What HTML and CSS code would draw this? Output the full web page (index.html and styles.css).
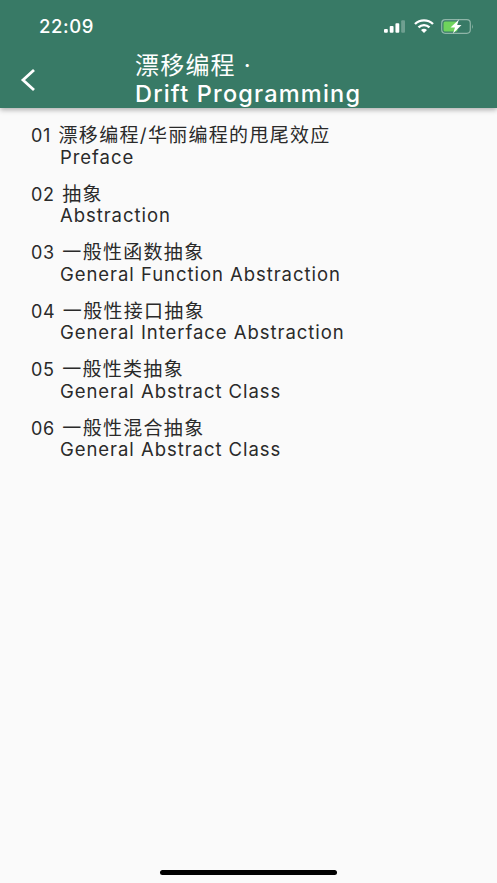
FILE: index.html
```html
<!DOCTYPE html>
<html lang="en">
<head>
    <meta charset="UTF-8">
    <meta name="viewport" content="width=device-width, initial-scale=1.0">
    <title>Drift Programming</title>
    <link rel="stylesheet" href="styles.css">
</head>
<body>
    <header class="app-bar">
        <div class="status-bar">
            <span class="time">22:09</span>
            <div class="status-icons">
                <svg class="signal" width="21" height="13" viewBox="0 0 22 13">
                    <rect x="0" y="9" width="4" height="4" rx="1" fill="#fff"/>
                    <rect x="6" y="6" width="4" height="7" rx="1" fill="#fff"/>
                    <rect x="12" y="3" width="4" height="10" rx="1" fill="#fff"/>
                    <rect x="18" y="0" width="4" height="13" rx="1" fill="#6f9f90"/>
                </svg>
                <svg class="wifi" width="20" height="14" viewBox="0 0 20 14">
                    <path d="M1 5 A13 13 0 0 1 19 5" fill="none" stroke="#fff" stroke-width="2.4"/>
                    <path d="M4.5 8.3 A8 8 0 0 1 15.5 8.3" fill="none" stroke="#fff" stroke-width="2.4"/>
                    <path d="M7 11 L10 14 L13 11 A4.5 4.5 0 0 0 7 11 Z" fill="#fff"/>
                </svg>
                <svg class="battery" width="33" height="15" viewBox="0 0 33 15">
                    <rect x="0.7" y="0.7" width="28.6" height="13.6" rx="3.5" fill="none" stroke="#8fb5a8" stroke-width="1.2"/>
                    <rect x="2.5" y="2.5" width="14" height="10" rx="1.5" fill="#6fd35c"/>
                    <path d="M31 5 Q32.5 7.500 31 10 Z" fill="#8fb5a8"/>
                    <path d="M18 0.500 L9.500 8.500 H14 L12 14.500 L20.500 6 H16 Z" fill="#fff"/>
                </svg>
            </div>
        </div>
        <div class="nav-bar">
            <svg class="back" width="16" height="24" viewBox="0 0 16 24">
                <path d="M14 2 L3 12 L14 22" fill="none" stroke="#fff" stroke-width="2.800"/>
            </svg>
            <h1 class="title">漂移编程 ·<br><span class="title-en">Drift Programming</span></h1>
        </div>
    </header>

    <main class="chapters">
        <a class="chapter"><span class="num">01</span> 漂移编程/华丽编程的甩尾效应<br><span class="en">Preface</span></a>
        <a class="chapter"><span class="num">02</span> 抽象<br><span class="en">Abstraction</span></a>
        <a class="chapter"><span class="num">03</span> 一般性函数抽象<br><span class="en">General Function Abstraction</span></a>
        <a class="chapter"><span class="num">04</span> 一般性接口抽象<br><span class="en">General Interface Abstraction</span></a>
        <a class="chapter"><span class="num">05</span> 一般性类抽象<br><span class="en">General Abstract Class</span></a>
        <a class="chapter"><span class="num">06</span> 一般性混合抽象<br><span class="en">General Abstract Class</span></a>
    </main>

    <div class="home-indicator"></div>
</body>
</html>
```

FILE: styles.css
```css
* {
    box-sizing: border-box;
}

body {
    margin: 0;
    height: 883px;
    overflow: hidden;
    position: relative;
    background: #fafafa;
    color: #2a2a2a;
    font-family: Inter, "Noto Sans CJK SC", sans-serif;
}

.app-bar {
    height: 108px;
    background: #387a66;
    color: #fff;
    box-shadow: 0 2px 5px rgba(0, 0, 0, 0.3);
}

.status-bar {
    height: 52px;
    padding: 13px 23px 0 39px;
    display: flex;
    justify-content: space-between;
    align-items: flex-start;
}

.time {
    font-size: 18.500px;
    line-height: 26px;
    font-weight: 500;
    letter-spacing: 0.6px;
}

.status-icons {
    display: flex;
    align-items: center;
    gap: 7px;
    height: 26px;
}

.signal {
    margin-right: 2px;
}

.nav-bar {
    display: flex;
    align-items: center;
    padding-left: 20px;
}

.back {
    flex: none;
}

.title {
    margin: 0 0 0 99px;
    font-size: 24px;
    line-height: 27.500px;
    font-weight: 400;
    letter-spacing: 1.2px;
    white-space: nowrap;
}

.title-en {
    font-size: 23.500px;
    font-weight: 500;
    letter-spacing: 1.2px;
}

.chapters {
    padding: 18px 31px 0;
    display: flex;
    flex-direction: column;
    gap: 16.500px;
}

.chapter {
    display: block;
    font-size: 19px;
    line-height: 20.500px;
    height: 42px;
    letter-spacing: 1.3px;
    word-spacing: 1px;
    white-space: nowrap;
}

.num,
.en {
    font-size: 18px;
    letter-spacing: 0.6px;
}

.en {
    font-size: 18.500px;
    margin-left: 29px;
    letter-spacing: 0.95px;
    word-spacing: 0;
}

.home-indicator {
    position: absolute;
    left: 160px;
    bottom: 8px;
    width: 177px;
    height: 5px;
    border-radius: 3px;
    background: #000;
}
```
